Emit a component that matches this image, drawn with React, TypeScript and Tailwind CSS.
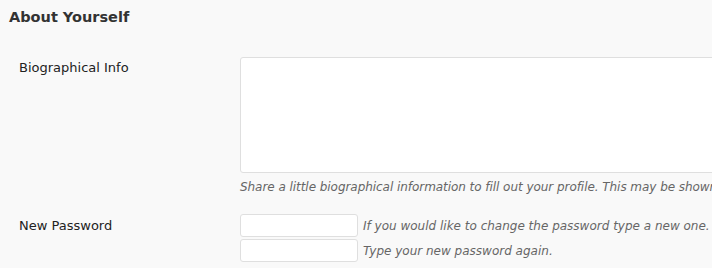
import React from "react";

export default function App() {
  const font = { fontFamily: '"DejaVu Sans", Verdana, sans-serif' };
  return (
    <div className="w-[712px] h-[268px] overflow-hidden bg-[#f9f9f9] text-[#333]" style={font}>
      <div className="pl-[9px] pt-[8px]">
        <h3 className="text-[14.5px] leading-[18px] font-bold text-[#333] whitespace-nowrap">About Yourself</h3>
      </div>
      <div className="mt-[31px] flex">
        <div className="w-[240px] shrink-0 pl-[19px] pt-[2px] text-[13px] leading-[18px] text-[#222]">Biographical Info</div>
        <div className="flex flex-col">
          <div className="w-[520px] h-[116px] bg-white border border-[#dfdfdf] rounded-[3px]"></div>
          <p className="mt-[6px] text-[12px] leading-[16px] italic text-[#666] whitespace-nowrap tracking-[-0.05px]">
            Share a little biographical information to fill out your profile. This may be shown
          </p>
        </div>
      </div>
      <div className="mt-[19px] flex">
        <div className="w-[240px] shrink-0 pl-[19px] pt-[3px] text-[13px] leading-[18px] text-[#222]">New Password</div>
        <div className="flex flex-col gap-[2px]">
          <div className="flex items-center">
            <div className="w-[118px] h-[23px] bg-white border border-[#dfdfdf] rounded-[3px]"></div>
            <span className="ml-[5px] text-[12px] italic text-[#666] whitespace-nowrap">If you would like to change the password type a new one.</span>
          </div>
          <div className="flex items-center">
            <div className="w-[118px] h-[23px] bg-white border border-[#dfdfdf] rounded-[3px]"></div>
            <span className="ml-[5px] text-[12px] italic text-[#666] whitespace-nowrap">Type your new password again.</span>
          </div>
        </div>
      </div>
    </div>
  );
}
